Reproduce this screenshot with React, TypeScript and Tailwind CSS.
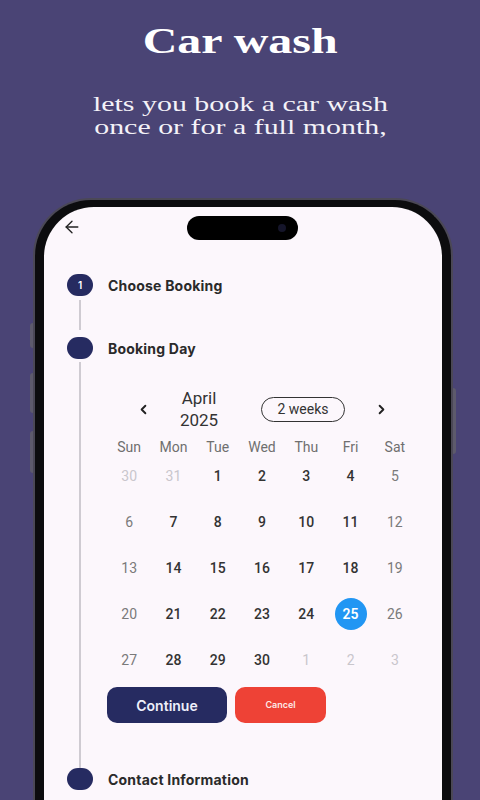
import { ArrowLeft, ChevronLeft, ChevronRight } from "lucide-react";

const days = ["Sun", "Mon", "Tue", "Wed", "Thu", "Fri", "Sat"];

const weeks: { d: number; out?: boolean }[][] = [
  [{ d: 30, out: true }, { d: 31, out: true }, { d: 1 }, { d: 2 }, { d: 3 }, { d: 4 }, { d: 5 }],
  [{ d: 6 }, { d: 7 }, { d: 8 }, { d: 9 }, { d: 10 }, { d: 11 }, { d: 12 }],
  [{ d: 13 }, { d: 14 }, { d: 15 }, { d: 16 }, { d: 17 }, { d: 18 }, { d: 19 }],
  [{ d: 20 }, { d: 21 }, { d: 22 }, { d: 23 }, { d: 24 }, { d: 25 }, { d: 26 }],
  [{ d: 27 }, { d: 28 }, { d: 29 }, { d: 30 }, { d: 1, out: true }, { d: 2, out: true }, { d: 3, out: true }],
];

function StepDot({ n }: { n?: string }) {
  return (
    <div className="flex h-[22px] w-[26px] shrink-0 items-center justify-center rounded-full bg-[#262b61] text-[10px] font-semibold text-white">
      {n}
    </div>
  );
}

function Calendar() {
  return (
    <div className="w-[310px] font-['Roboto',sans-serif]">
      <div className="flex h-[44px] items-center">
        <ChevronLeft className="ml-[29px] h-[15px] w-[15px] text-[#222]" strokeWidth={3} />
        <div className="ml-[8px] w-[80px] text-center text-[17px] leading-[22px] text-[#333]">
          April
          <br />
          2025
        </div>
        <div className="ml-[22px] flex h-[25px] w-[84px] items-center justify-center rounded-full border-[1.5px] border-[#333] text-[14px] text-[#333]">
          2 weeks
        </div>
        <ChevronRight className="ml-[29px] h-[15px] w-[15px] text-[#222]" strokeWidth={3} />
      </div>
      <div className="mt-[4px] grid h-[24px] grid-cols-7 items-center text-center text-[14px] text-[#6f6f6f]">
        {days.map((d) => (
          <span key={d}>{d}</span>
        ))}
      </div>
      <div className="grid grid-cols-7 gap-y-[12px] text-center text-[14px]">
        {weeks.flat().map((c, i) => {
          const weekend = i % 7 === 0 || i % 7 === 6;
          const sel = c.d === 25 && !c.out;
          return (
            <div key={i} className="flex h-[34px] items-center justify-center">
              {sel ? (
                <span className="flex h-[32px] w-[32px] items-center justify-center rounded-full bg-[#2196f3] font-semibold text-white">
                  25
                </span>
              ) : (
                <span
                  className={
                    c.out
                      ? "text-[#c9c6cc]"
                      : weekend
                        ? "text-[#7a7a7a]"
                        : "font-medium text-[#333]"
                  }
                >
                  {c.d}
                </span>
              )}
            </div>
          );
        })}
      </div>
    </div>
  );
}

export default function App() {
  return (
    <div className="relative h-[800px] w-[480px] overflow-hidden bg-[#4a4475]">
      <div className="pt-[22px] text-center">
        <h1 className="inline-block scale-x-[1.37] font-['Liberation_Serif',serif] text-[35px] font-bold leading-[40px] text-white">
          Car wash
        </h1>
      </div>
      <div className="mt-[30px] text-center">
        <p className="inline-block scale-x-[1.36] font-['Liberation_Serif',serif] text-[22px] leading-[23px] text-[#f4f2f8]">
          lets you book a car wash
          <br />
          once or for a full month,
        </p>
      </div>

      <div className="relative ml-[33px] mt-[58px] w-[420px]">
        {/* side buttons */}
        <div className="absolute left-[-3px] top-[125px] h-[25px] w-[3px] rounded-l bg-[#5d5a6c]" />
        <div className="absolute left-[-3px] top-[175px] h-[40px] w-[3px] rounded-l bg-[#5d5a6c]" />
        <div className="absolute left-[-3px] top-[233px] h-[42px] w-[3px] rounded-l bg-[#5d5a6c]" />
        <div className="absolute right-[-3px] top-[190px] h-[66px] w-[3px] rounded-r bg-[#5d5a6c]" />

        <div className="h-[620px] rounded-t-[58px] border-2 border-b-0 border-[#4b4856] bg-[#0c0c0e] px-[9px] pt-[7px]">
          <div className="relative h-[620px] rounded-t-[50px] bg-[#fcf7fc] font-['Inter',sans-serif]">
            <div className="absolute left-[143px] top-[9px] h-[24px] w-[111px] rounded-full bg-black">
              <div className="absolute right-[12px] top-[8px] h-[8px] w-[8px] rounded-full bg-[#15152a]" />
            </div>

            <div className="pl-[18px] pt-[10px]">
              <ArrowLeft className="h-[20px] w-[20px] text-[#222]" strokeWidth={1.6} />
            </div>

            <div className="pl-[23px] pt-[37px]">
              <div className="flex h-[22px] items-center gap-[15px]">
                <StepDot n="1" />
                <span className="text-[14px] font-bold tracking-[0.2px] text-[#2a2a2a]">Choose Booking</span>
              </div>
              <div className="ml-[12px] mt-[4px] h-[30px] w-[2px] bg-[#cfcbd2]" />
              <div className="mt-[7px] flex h-[22px] items-center gap-[15px]">
                <StepDot />
                <span className="text-[14px] font-bold tracking-[0.2px] text-[#2a2a2a]">Booking Day</span>
              </div>
              <div className="ml-[12px] mt-[3px] border-l-2 border-[#cfcbd2] pl-[26px] pt-[25px] pb-[45px]">
                <Calendar />
                <div className="mt-[10px] flex gap-[8px]">
                  <button className="h-[36px] w-[120px] rounded-[10px] bg-[#262b61] text-[14px] font-semibold text-[#eef0fb]">
                    Continue
                  </button>
                  <button className="h-[36px] w-[91px] rounded-[10px] bg-[#ee4236] text-[9px] font-semibold text-[#fde9e6]">
                    Cancel
                  </button>
                </div>
              </div>
              <div className="flex h-[22px] items-center gap-[15px]">
                <StepDot />
                <span className="text-[14px] font-bold tracking-[0.2px] text-[#2a2a2a]">Contact Information</span>
              </div>
            </div>
          </div>
        </div>
      </div>
    </div>
  );
}
